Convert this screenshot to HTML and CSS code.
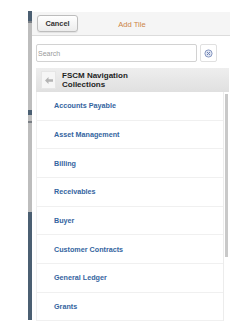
FILE: index.html
```html
<!DOCTYPE html>
<html lang="en">
<head>
    <meta charset="UTF-8">
    <meta name="viewport" content="width=device-width, initial-scale=1.0">
    <title>Add Tile</title>
    <link rel="stylesheet" href="styles.css">
</head>
<body>
    <div class="page">
        <!-- Edge of the page behind the panel -->
        <div class="behind-strip">
            <div class="seg seg-dark seg-top"></div>
            <div class="seg seg-dot"></div>
            <div class="seg seg-gray seg-a"></div>
            <div class="seg seg-dark seg-mark"></div>
            <div class="seg seg-gray seg-b"></div>
            <div class="seg seg-dot"></div>
            <div class="seg seg-gray seg-c"></div>
            <div class="seg seg-dark seg-bottom"></div>
        </div>

        <div class="panel">
            <div class="panel-header">
                <button class="btn-cancel">Cancel</button>
                <span class="panel-title">Add Tile</span>
            </div>

            <div class="panel-body">
                <div class="search-row">
                    <input type="text" class="search-input" placeholder="Search">
                    <button class="btn-clear" aria-label="Clear">
                        <svg width="9" height="9" viewBox="0 0 9 9">
                            <circle cx="4.5" cy="4.5" r="3.6" fill="#dfe5f2" stroke="#8797c0" stroke-width="1"/>
                            <path d="M3 3 L6 6 M6 3 L3 6" stroke="#7082b2" stroke-width="1"/>
                        </svg>
                    </button>
                </div>

                <div class="nav-header">
                    <div class="back-box">
                        <svg width="8" height="7" viewBox="0 0 8 7">
                            <path d="M0 3.5 L3.5 0 L3.5 2.2 L8 2.2 L8 4.8 L3.5 4.8 L3.5 7 Z" fill="#b4b4b4"/>
                        </svg>
                    </div>
                    <div class="nav-title">FSCM Navigation<br>Collections</div>
                </div>

                <div class="list-wrap">
                    <ul class="tile-list">
                        <li>Accounts Payable</li>
                        <li>Asset Management</li>
                        <li>Billing</li>
                        <li>Receivables</li>
                        <li>Buyer</li>
                        <li>Customer Contracts</li>
                        <li>General Ledger</li>
                        <li>Grants</li>
                    </ul>
                    <div class="scroll-track">
                        <div class="scroll-thumb"></div>
                    </div>
                </div>
            </div>
        </div>
    </div>
</body>
</html>
```

FILE: styles.css
```css
* {
    box-sizing: border-box;
    margin: 0;
    padding: 0;
}

body {
    font-family: 'Liberation Sans', Arial, sans-serif;
    background-color: #fff;
    width: 250px;
    height: 329px;
    overflow: hidden;
}

.page {
    display: flex;
    padding-left: 28px;
}

/* strip of the page underneath */
.behind-strip {
    width: 4px;
    margin-top: 11px;
    display: flex;
    flex-direction: column;
}

.seg {
    width: 4px;
}

.seg-dark {
    background-color: #4b5f72;
}

.seg-gray {
    background-color: #bdbdbd;
}

.seg-dot {
    height: 2px;
    background-color: #7a7f85;
}

.seg-top {
    height: 10px;
}

.seg-a {
    height: 87px;
}

.seg-mark {
    height: 5px;
}

.seg-b {
    height: 6px;
}

.seg-c {
    height: 89px;
}

.seg-bottom {
    height: 108px;
}

.panel {
    width: 198px;
    margin-top: 12px;
}

.panel-header {
    height: 24px;
    background-color: #f5f5f5;
    border-bottom: 1px solid #dcdcdc;
    display: flex;
    align-items: center;
    padding-left: 5px;
}

.btn-cancel {
    width: 41px;
    height: 17px;
    font-family: inherit;
    font-size: 7.4px;
    font-weight: bold;
    color: #333;
    background: linear-gradient(#ffffff, #ececec);
    border: 1px solid #bdbdbd;
    border-radius: 3px;
    box-shadow: 0 1px 1px rgba(0, 0, 0, 0.08);
}

.panel-title {
    flex: 1;
    text-align: center;
    font-size: 7.6px;
    color: #cc8548;
    padding-right: 44px;
    padding-top: 1px;
}

.panel-body {
    padding-left: 4px;
    padding-right: 1px;
}

.search-row {
    display: flex;
    gap: 3px;
    margin-top: 8px;
}

.search-input {
    width: 161px;
    height: 18px;
    border: 1px solid #d2d2d2;
    border-radius: 2px;
    font-family: inherit;
    font-size: 7px;
    padding-left: 1px;
    color: #333;
}

.search-input::placeholder {
    color: #9a9a9a;
}

.btn-clear {
    width: 17px;
    height: 18px;
    background-color: #fff;
    border: 1px solid #e0e0e0;
    border-radius: 2px;
    display: flex;
    align-items: center;
    justify-content: center;
}

.nav-header {
    margin-top: 6px;
    height: 24px;
    background: linear-gradient(#eeeeee, #e0e0e0);
    display: flex;
    align-items: center;
    padding-left: 5px;
}

.back-box {
    width: 15px;
    height: 18px;
    background-color: #f6f6f6;
    border: 1px solid #e6e6e6;
    display: flex;
    align-items: center;
    justify-content: center;
    margin-right: 6px;
}

.nav-title {
    font-size: 8px;
    font-weight: bold;
    line-height: 9.5px;
    color: #1e1e1e;
}

.list-wrap {
    display: flex;
    height: 229px;
}

.tile-list {
    flex: 1;
    list-style: none;
    border-left: 1px solid #f0f0f0;
    border-right: 1px solid #ececec;
}

.tile-list li {
    height: 28.67px;
    border-bottom: 1px solid #f0f0f0;
    display: flex;
    align-items: center;
    padding-left: 17px;
    font-size: 7.2px;
    font-weight: bold;
    color: #3464a0;
}

.scroll-track {
    width: 5px;
    padding-left: 1px;
    padding-top: 2px;
}

.scroll-thumb {
    width: 3px;
    height: 163px;
    background-color: #c9c9c9;
}
```
